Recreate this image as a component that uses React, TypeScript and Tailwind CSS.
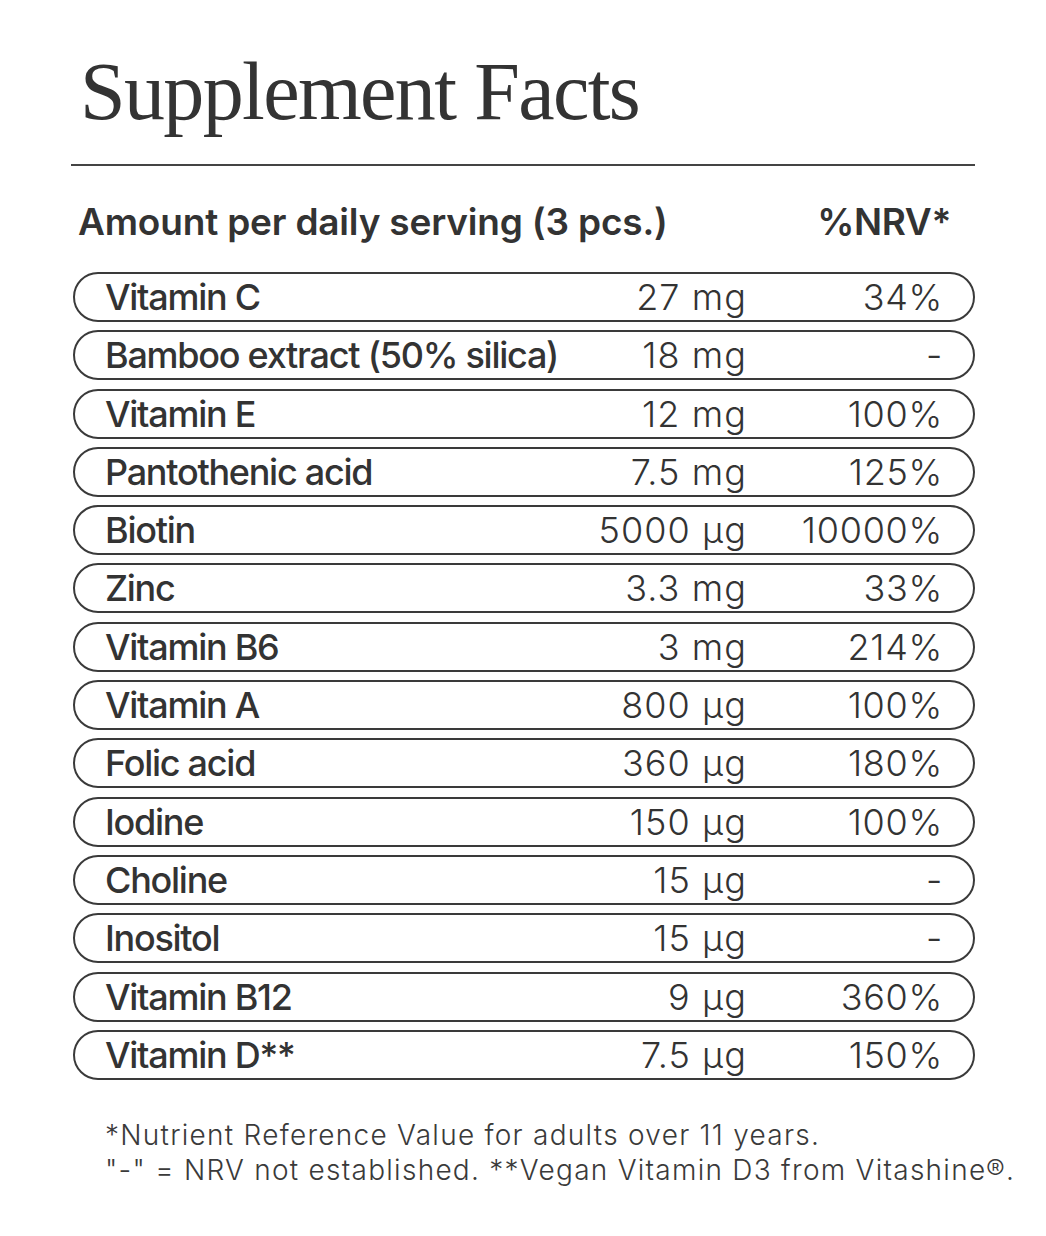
import React from "react";

const rows: [string, string, string][] = [
  ["Vitamin C", "27 mg", "34%"],
  ["Bamboo extract (50% silica)", "18 mg", "-"],
  ["Vitamin E", "12 mg", "100%"],
  ["Pantothenic acid", "7.5 mg", "125%"],
  ["Biotin", "5000 µg", "10000%"],
  ["Zinc", "3.3 mg", "33%"],
  ["Vitamin B6", "3 mg", "214%"],
  ["Vitamin A", "800 µg", "100%"],
  ["Folic acid", "360 µg", "180%"],
  ["Iodine", "150 µg", "100%"],
  ["Choline", "15 µg", "-"],
  ["Inositol", "15 µg", "-"],
  ["Vitamin B12", "9 µg", "360%"],
  ["Vitamin D**", "7.5 µg", "150%"],
];

function NutrientRow({ name, amount, nrv }: { name: string; amount: string; nrv: string }) {
  return (
    <div className="h-[50px] border-2 border-[#3a3a3a] rounded-full flex items-center pl-[30px] pr-[30px] text-[36px] leading-none">
      <span className="flex-1 font-medium tracking-[-0.035em]">{name}</span>
      <span className="font-light tracking-[0.03em]">{amount}</span>
      <span className="w-[196px] text-right font-light tracking-[0.02em]">{nrv}</span>
    </div>
  );
}

export default function App() {
  return (
    <div className="w-[1046px] h-[1236px] bg-white text-[#333] font-['Inter',sans-serif]">
      <div className="ml-[71px] w-[904px] pt-[51px]">
        <h1 className="pl-[9px] font-['Liberation_Serif',serif] text-[82px] leading-none tracking-[-0.02em] text-[#333]">
          Supplement Facts
        </h1>
        <div className="mt-[31px] h-[2px] bg-[#444]" />
        <div className="mt-[37px] flex items-center pl-[7px] pr-[24px] text-[37px] leading-none font-semibold tracking-[-0.005em]">
          <span className="flex-1">Amount per daily serving (3 pcs.)</span>
          <span className="tracking-[-0.01em]">%NRV*</span>
        </div>
        <div className="mt-[32px] ml-[2px] flex flex-col gap-[8.3px]">
          {rows.map(([n, a, v]) => (
            <NutrientRow key={n} name={n} amount={a} nrv={v} />
          ))}
        </div>
        <div className="mt-[38px] pl-[34px] text-[28px] leading-[35px] font-light tracking-[0.045em] text-[#3a3a3a] whitespace-nowrap">
          <p>*Nutrient Reference Value for adults over 11 years.</p>
          <p>"-" = NRV not established. **Vegan Vitamin D3 from Vitashine®.</p>
        </div>
      </div>
    </div>
  );
}
